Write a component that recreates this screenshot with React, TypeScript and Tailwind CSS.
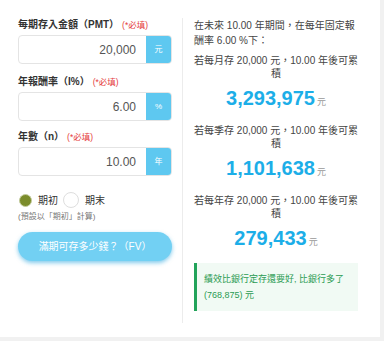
import React from "react";

const font = { fontFamily: '"Liberation Sans", "Noto Sans CJK TC", sans-serif' };

function Field({ label, value, unit }: { label: string; value: string; unit: string }) {
  return (
    <div>
      <div className="h-[14px] leading-[14px] text-[10px] font-bold text-[#333] whitespace-nowrap flex items-center">
        <span>{label}</span>
        <span className="ml-[3px] text-[8.5px] font-normal text-[#e53b3b]">(*必填)</span>
      </div>
      <div className="mt-[3px] h-[29px] flex border border-[#e4e4e4] rounded-[4px] overflow-hidden">
        <div className="flex-1 flex items-center justify-end pr-[10px] text-[12px] text-[#555]">{value}</div>
        <div className="w-[25px] bg-[#5ec8f0] flex items-center justify-center text-[8px] text-white">{unit}</div>
      </div>
    </div>
  );
}

function Block({ period, amount, first }: { period: string; amount: string; first?: boolean }) {
  return (
    <div className={first ? "mt-[6px]" : "mt-[14px]"}>
      <div className="text-center text-[10px] leading-[13px] text-[#444] whitespace-nowrap">
        若每{period}存 20,000 元，10.00 年後可累
        <br />積
      </div>
      <div className="mt-[6px] h-[24px] flex items-end justify-center">
        <span className="text-[20px] leading-[24px] font-bold text-[#1caee8]">{amount}</span>
        <span className="ml-[2px] mb-[3px] text-[9px] leading-[10px] text-[#999]">元</span>
      </div>
    </div>
  );
}

export default function App() {
  return (
    <div className="w-[384px] h-[341px] bg-[#f1f1f1]" style={font}>
      <div className="w-[380px] h-[337px] bg-white flex pt-[18px] pb-[14px]">
        <div className="w-[187px] pl-[18px] pr-[10px] border-r border-[#ececec]">
          <Field label="每期存入金額（PMT）" value="20,000" unit="元" />
          <div className="mt-[11px]">
            <Field label="年報酬率（I%）" value="6.00" unit="%" />
          </div>
          <div className="mt-[9px]">
            <Field label="年數（n）" value="10.00" unit="年" />
          </div>
          <div className="mt-[15px] h-[18px] flex items-center pl-[1px] text-[10px] text-[#333]">
            <span className="w-[13px] h-[13px] rounded-full bg-[#7b8c2b] border border-[#c3cb9c]" />
            <span className="ml-[6px]">期初</span>
            <span className="ml-[5px] w-[16px] h-[16px] rounded-full bg-white border border-[#dedede]" />
            <span className="ml-[6px]">期末</span>
          </div>
          <div className="mt-[2px] text-[8px] leading-[11px] text-[#777] whitespace-nowrap">(預設以「期初」計算)</div>
          <div className="mt-[10px] h-[29px] rounded-full bg-[#72d0f3] shadow-[0_2px_4px_rgba(30,160,220,0.55)] flex items-center justify-center text-[10px] text-white whitespace-nowrap">
            滿期可存多少錢？（FV）
          </div>
        </div>
        <div className="flex-1 pl-[11px] pr-[22px]">
          <div className="text-[10px] leading-[15px] text-[#444] whitespace-nowrap">
            在未來 10.00 年期間，在每年固定報
            <br />
            酬率 6.00 %下：
          </div>
          <Block period="月" amount="3,293,975" first />
          <Block period="季" amount="1,101,638" />
          <Block period="年" amount="279,433" />
          <div className="mt-[13px] h-[48px] bg-[#f1faf4] border-l-[3px] border-[#22a35a] pl-[7px] py-[8px] text-[9px] leading-[16px] text-[#2a9a52] whitespace-nowrap">
            績效比銀行定存還要好, 比銀行多了
            <br />
            (768,875) 元
          </div>
        </div>
      </div>
    </div>
  );
}
